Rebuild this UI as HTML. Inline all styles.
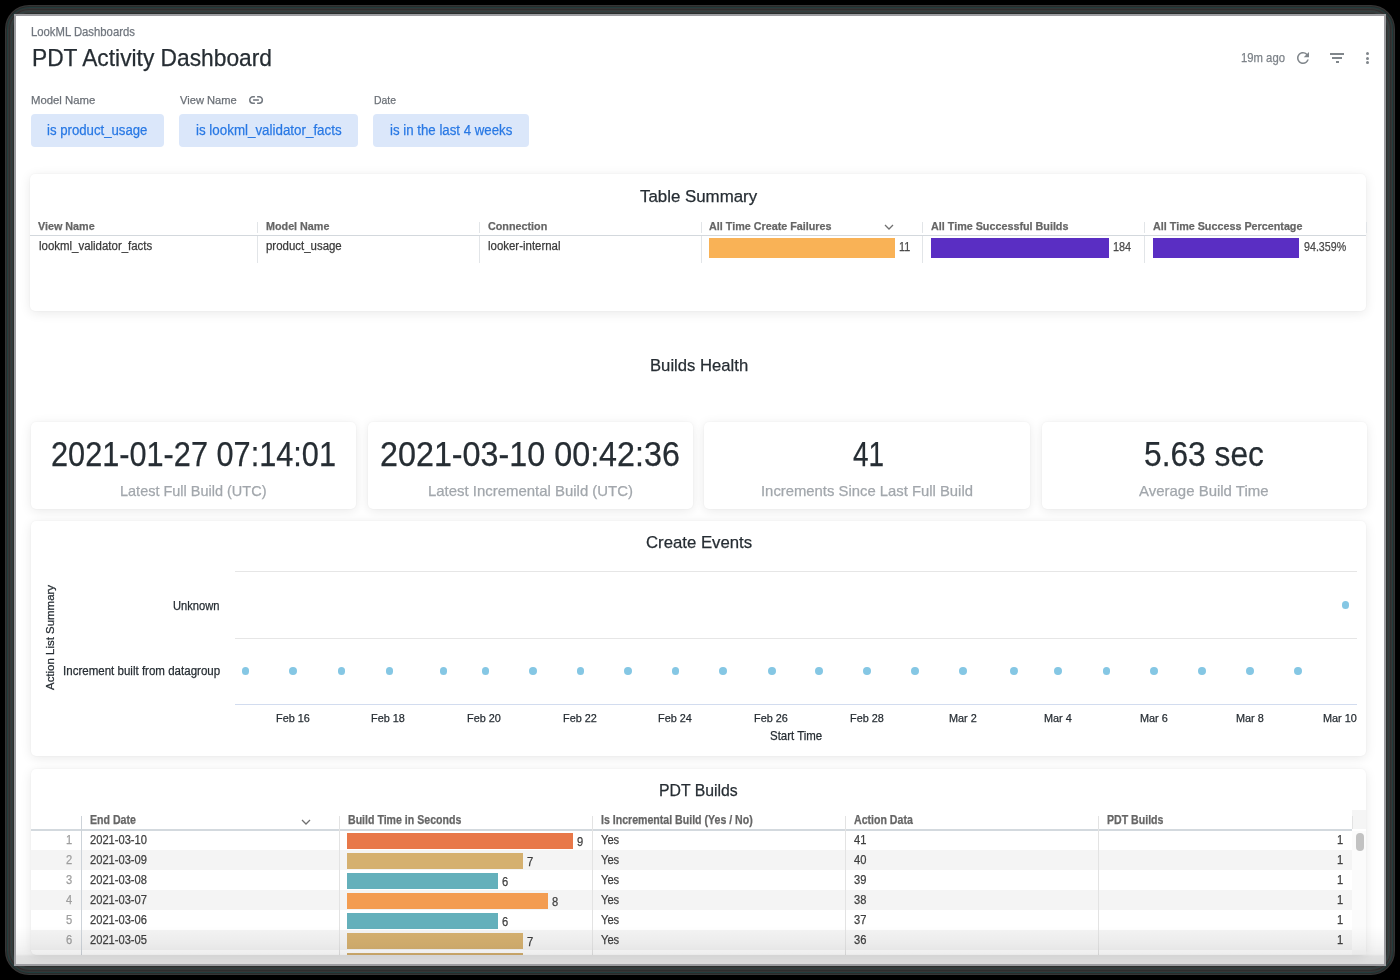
<!DOCTYPE html>
<html><head><meta charset="utf-8">
<style>
*{box-sizing:border-box;margin:0;padding:0}
html,body{width:1400px;height:980px;overflow:hidden;background:#000;font-family:"Liberation Sans",sans-serif}
.abs{position:absolute}
.fr{position:absolute}
#win{position:absolute;left:14px;top:14px;width:1372px;height:952px;border:2px solid #9d9da1;background:#fff;overflow:hidden}
#c{position:absolute;left:-16px;top:-16px;width:1400px;height:980px;will-change:transform}
.t{position:absolute;white-space:nowrap;line-height:1;transform-origin:0 0;-webkit-text-stroke:0.25px currentColor}
.card{position:absolute;background:#fff;border-radius:5px;box-shadow:0 0 2px rgba(0,0,0,.07),0 2px 12px rgba(0,0,0,.09)}
</style></head>
<body>
<div class="fr" style="left:5px;top:5px;width:1390px;height:970px;border-radius:24px;background:#363636"></div><div class="fr" style="left:6px;top:6px;width:1388px;height:968px;border-radius:23px;background:#2a2a2a"></div><div class="fr" style="left:7px;top:7px;width:1386px;height:966px;border-radius:22px;background:#213d3d"></div><div class="fr" style="left:8px;top:8px;width:1384px;height:964px;border-radius:21px;background:#373535"></div><div class="fr" style="left:9px;top:9px;width:1382px;height:962px;border-radius:20px;background:#2e2e2e"></div><div class="fr" style="left:10px;top:10px;width:1380px;height:960px;border-radius:19px;background:#3a3a3a"></div><div class="fr" style="left:11px;top:11px;width:1378px;height:958px;border-radius:18px;background:#304040"></div><div class="fr" style="left:12px;top:12px;width:1376px;height:956px;border-radius:17px;background:#383838"></div><div class="fr" style="left:13px;top:13px;width:1374px;height:954px;border-radius:16px;background:#2a302e"></div>
<div id="win"><div id="c">
<div class="t" style="left:31.00px;top:26px;font-size:12.06px;color:#70767e;transform:scaleX(0.9381);">LookML Dashboards</div>
<div class="t" style="left:32.00px;top:47px;font-size:23.26px;color:#262d33;transform:scaleX(0.9791);">PDT Activity Dashboard</div>
<div class="t" style="left:1241.40px;top:52px;font-size:12.06px;color:#7d8389;transform:scaleX(0.9376);">19m ago</div>
<svg class="abs" style="left:1293.7px;top:49px" width="18" height="18" viewBox="0 0 24 24"><path fill="#80868b" d="M17.65 6.35A7.958 7.958 0 0 0 12 4c-4.42 0-7.99 3.58-7.99 8s3.57 8 7.99 8c3.73 0 6.84-2.55 7.73-6h-2.08A5.990 5.990 0 0 1 12 18c-3.310 0-6-2.69-6-6s2.690-6 6-6c1.66 0 3.140.69 4.220 1.780L13 11h7V4l-2.35 2.35z"/></svg>
<div class="abs" style="left:1330px;top:53.2px;width:14px;height:1.7px;background:#80868b"></div>
<div class="abs" style="left:1332.3px;top:57.2px;width:9.4px;height:1.7px;background:#80868b"></div>
<div class="abs" style="left:1335.5px;top:61.2px;width:3px;height:1.7px;background:#80868b"></div>
<div class="abs" style="left:1366.1px;top:51.9px;width:3.2px;height:3.2px;border-radius:50%;background:#80868b"></div>
<div class="abs" style="left:1366.1px;top:56.6px;width:3.2px;height:3.2px;border-radius:50%;background:#80868b"></div>
<div class="abs" style="left:1366.1px;top:61.3px;width:3.2px;height:3.2px;border-radius:50%;background:#80868b"></div>
<div class="t" style="left:30.70px;top:94px;font-size:11.63px;color:#6b7077;transform:scaleX(0.9753);">Model Name</div>
<div class="t" style="left:179.70px;top:94px;font-size:11.63px;color:#6b7077;transform:scaleX(0.9571);">View Name</div>
<div class="t" style="left:374.00px;top:94px;font-size:11.63px;color:#6b7077;transform:scaleX(0.8967);">Date</div>
<svg class="abs" style="left:240px;top:90px" width="30" height="22" viewBox="240 90 30 22"><g fill="none" stroke="#737980" stroke-width="1.5"><path d="M254.9 96.85H252.9A3.15 3.15 0 0 0 252.9 103.15H254.9"/><path d="M257.1 96.85H259.2A3.15 3.15 0 0 1 259.2 103.15H257.1"/><path d="M253.1 100H258.9" stroke-width="1.6"/></g></svg>
<div class="abs" style="left:31px;top:113.6px;width:133.0px;height:33.8px;background:#dbe7fa;border-radius:4px"></div>
<div class="t" style="left:47.00px;top:123px;font-size:14.68px;color:#2878e4;transform:scaleX(0.8990);">is product_usage</div>
<div class="abs" style="left:179.3px;top:113.6px;width:178.3px;height:33.8px;background:#dbe7fa;border-radius:4px"></div>
<div class="t" style="left:195.70px;top:123px;font-size:14.68px;color:#2878e4;transform:scaleX(0.9110);">is lookml_validator_facts</div>
<div class="abs" style="left:373.3px;top:113.6px;width:155.5px;height:33.8px;background:#dbe7fa;border-radius:4px"></div>
<div class="t" style="left:389.60px;top:123px;font-size:14.68px;color:#2878e4;transform:scaleX(0.9038);">is in the last 4 weeks</div>
<div class="card" style="left:30px;top:174px;width:1336px;height:137px"></div>
<div class="t" style="left:640.00px;top:189px;font-size:16.86px;color:#262d33;">Table Summary</div>
<div class="abs" style="left:30px;top:234.9px;width:1336px;height:1.4px;background:#d3d8dd"></div>
<div class="abs" style="left:257.0px;top:222px;width:1px;height:11px;background:#e2e5e8"></div>
<div class="abs" style="left:257.0px;top:236.3px;width:1px;height:26.5px;background:#e2e5e8"></div>
<div class="abs" style="left:478.5px;top:222px;width:1px;height:11px;background:#e2e5e8"></div>
<div class="abs" style="left:478.5px;top:236.3px;width:1px;height:26.5px;background:#e2e5e8"></div>
<div class="abs" style="left:700.5px;top:222px;width:1px;height:11px;background:#e2e5e8"></div>
<div class="abs" style="left:700.5px;top:236.3px;width:1px;height:26.5px;background:#e2e5e8"></div>
<div class="abs" style="left:922.0px;top:222px;width:1px;height:11px;background:#e2e5e8"></div>
<div class="abs" style="left:922.0px;top:236.3px;width:1px;height:26.5px;background:#e2e5e8"></div>
<div class="abs" style="left:1144.0px;top:222px;width:1px;height:11px;background:#e2e5e8"></div>
<div class="abs" style="left:1144.0px;top:236.3px;width:1px;height:26.5px;background:#e2e5e8"></div>
<div class="abs" style="left:1365.5px;top:222px;width:1px;height:11px;background:#e2e5e8"></div>
<div class="t" style="left:38.40px;top:220px;font-size:11.63px;color:#666666;font-weight:700;transform:scaleX(0.9263);">View Name</div>
<div class="t" style="left:265.50px;top:220px;font-size:11.63px;color:#666666;font-weight:700;transform:scaleX(0.9263);">Model Name</div>
<div class="t" style="left:487.50px;top:220px;font-size:11.63px;color:#666666;font-weight:700;transform:scaleX(0.9263);">Connection</div>
<div class="t" style="left:709.00px;top:220px;font-size:11.63px;color:#666666;font-weight:700;transform:scaleX(0.9263);">All Time Create Failures</div>
<div class="t" style="left:930.75px;top:220px;font-size:11.63px;color:#666666;font-weight:700;transform:scaleX(0.9263);">All Time Successful Builds</div>
<div class="t" style="left:1152.50px;top:220px;font-size:11.63px;color:#666666;font-weight:700;transform:scaleX(0.9263);">All Time Success Percentage</div>
<div class="t" style="left:38.75px;top:240px;font-size:12.50px;color:#3a3a3a;transform:scaleX(0.9156);">lookml_validator_facts</div>
<div class="t" style="left:265.50px;top:240px;font-size:12.50px;color:#3a3a3a;transform:scaleX(0.9156);">product_usage</div>
<div class="t" style="left:487.50px;top:240px;font-size:12.50px;color:#3a3a3a;transform:scaleX(0.9156);">looker-internal</div>
<div class="abs" style="left:709px;top:238px;width:185.5px;height:20px;background:#f9b256"></div>
<div class="abs" style="left:930.75px;top:238px;width:178px;height:20px;background:#5a2ec3"></div>
<div class="abs" style="left:1152.5px;top:238px;width:146.25px;height:20px;background:#5a2ec3"></div>
<div class="t" style="left:898.75px;top:241px;font-size:12.06px;color:#4a4a4a;transform:scaleX(0.8967);">11</div>
<div class="t" style="left:1113.10px;top:241px;font-size:12.06px;color:#4a4a4a;transform:scaleX(0.9034);">184</div>
<div class="t" style="left:1303.75px;top:241px;font-size:12.06px;color:#4a4a4a;transform:scaleX(0.8866);">94.359%</div>
<svg class="abs" style="left:884px;top:223px" width="10" height="8" viewBox="0 0 10 8"><path d="M1 2 L5 6 L9 2" fill="none" stroke="#707070" stroke-width="1.3"/></svg>
<div class="t" style="left:649.60px;top:357px;font-size:17.15px;color:#262d33;transform:scaleX(0.9721);">Builds Health</div>
<div class="card" style="left:31px;top:421.5px;width:325px;height:87.5px"></div>
<div class="t" style="left:51.00px;top:437px;font-size:34.88px;color:#262d33;transform:scaleX(0.8799);">2021-01-27 07:14:01</div>
<div class="t" style="left:120.00px;top:484px;font-size:14.97px;color:#a2a7ac;transform:scaleX(0.9674);">Latest Full Build (UTC)</div>
<div class="card" style="left:367.5px;top:421.5px;width:325.0px;height:87.5px"></div>
<div class="t" style="left:380.00px;top:437px;font-size:34.88px;color:#262d33;transform:scaleX(0.9262);">2021-03-10 00:42:36</div>
<div class="t" style="left:427.50px;top:484px;font-size:14.97px;color:#a2a7ac;transform:scaleX(0.9977);">Latest Incremental Build (UTC)</div>
<div class="card" style="left:704px;top:421.5px;width:326px;height:87.5px"></div>
<div class="t" style="left:852.50px;top:437px;font-size:34.88px;color:#262d33;transform:scaleX(0.8006);">41</div>
<div class="t" style="left:761.00px;top:484px;font-size:14.97px;color:#a2a7ac;transform:scaleX(0.9913);">Increments Since Last Full Build</div>
<div class="card" style="left:1041.5px;top:421.5px;width:325.0px;height:87.5px"></div>
<div class="t" style="left:1144.00px;top:437px;font-size:34.88px;color:#262d33;transform:scaleX(0.9101);">5.63 sec</div>
<div class="t" style="left:1139.00px;top:484px;font-size:14.97px;color:#a2a7ac;">Average Build Time</div>
<div class="card" style="left:30.8px;top:521px;width:1335.2px;height:235px"></div>
<div class="t" style="left:645.60px;top:534px;font-size:17.15px;color:#262d33;transform:scaleX(0.9774);">Create Events</div>
<div class="abs" style="left:235px;top:571.2px;width:1122px;height:1px;background:#e6e6e6"></div>
<div class="abs" style="left:235px;top:637.8px;width:1122px;height:1px;background:#e6e6e6"></div>
<div class="abs" style="left:235px;top:703.8px;width:1122px;height:1.2px;background:#d2dcef"></div>
<div class="t" style="left:173.30px;top:600px;font-size:12.50px;color:#262d33;transform:scaleX(0.8921);">Unknown</div>
<div class="t" style="left:63.20px;top:665px;font-size:12.50px;color:#262d33;transform:scaleX(0.9233);">Increment built from datagroup</div>
<div class="abs" style="left:49.5px;top:637.15px;width:0;height:0;transform:rotate(-90deg)"><div class="t" style="left:-52.55px;top:-6.40px;font-size:11.63px;color:#262d33;transform:scaleX(0.9857)">Action List Summary</div></div>
<div class="abs" style="left:241.6px;top:667.1px;width:7.8px;height:7.8px;border-radius:50%;background:#85c7e4"></div>
<div class="abs" style="left:289.1px;top:667.1px;width:7.8px;height:7.8px;border-radius:50%;background:#85c7e4"></div>
<div class="abs" style="left:337.6px;top:667.1px;width:7.8px;height:7.8px;border-radius:50%;background:#85c7e4"></div>
<div class="abs" style="left:385.6px;top:667.1px;width:7.8px;height:7.8px;border-radius:50%;background:#85c7e4"></div>
<div class="abs" style="left:439.6px;top:667.1px;width:7.8px;height:7.8px;border-radius:50%;background:#85c7e4"></div>
<div class="abs" style="left:481.6px;top:667.1px;width:7.8px;height:7.8px;border-radius:50%;background:#85c7e4"></div>
<div class="abs" style="left:529.1px;top:667.1px;width:7.8px;height:7.8px;border-radius:50%;background:#85c7e4"></div>
<div class="abs" style="left:576.6px;top:667.1px;width:7.8px;height:7.8px;border-radius:50%;background:#85c7e4"></div>
<div class="abs" style="left:624.1px;top:667.1px;width:7.8px;height:7.8px;border-radius:50%;background:#85c7e4"></div>
<div class="abs" style="left:671.6px;top:667.1px;width:7.8px;height:7.8px;border-radius:50%;background:#85c7e4"></div>
<div class="abs" style="left:719.1px;top:667.1px;width:7.8px;height:7.8px;border-radius:50%;background:#85c7e4"></div>
<div class="abs" style="left:768.1px;top:667.1px;width:7.8px;height:7.8px;border-radius:50%;background:#85c7e4"></div>
<div class="abs" style="left:815.1px;top:667.1px;width:7.8px;height:7.8px;border-radius:50%;background:#85c7e4"></div>
<div class="abs" style="left:863.1px;top:667.1px;width:7.8px;height:7.8px;border-radius:50%;background:#85c7e4"></div>
<div class="abs" style="left:911.1px;top:667.1px;width:7.8px;height:7.8px;border-radius:50%;background:#85c7e4"></div>
<div class="abs" style="left:959.1px;top:667.1px;width:7.8px;height:7.8px;border-radius:50%;background:#85c7e4"></div>
<div class="abs" style="left:1010.1px;top:667.1px;width:7.8px;height:7.8px;border-radius:50%;background:#85c7e4"></div>
<div class="abs" style="left:1054.1px;top:667.1px;width:7.8px;height:7.8px;border-radius:50%;background:#85c7e4"></div>
<div class="abs" style="left:1102.6px;top:667.1px;width:7.8px;height:7.8px;border-radius:50%;background:#85c7e4"></div>
<div class="abs" style="left:1150.1px;top:667.1px;width:7.8px;height:7.8px;border-radius:50%;background:#85c7e4"></div>
<div class="abs" style="left:1198.1px;top:667.1px;width:7.8px;height:7.8px;border-radius:50%;background:#85c7e4"></div>
<div class="abs" style="left:1246.1px;top:667.1px;width:7.8px;height:7.8px;border-radius:50%;background:#85c7e4"></div>
<div class="abs" style="left:1294.1px;top:667.1px;width:7.8px;height:7.8px;border-radius:50%;background:#85c7e4"></div>
<div class="abs" style="left:1341.6px;top:601.1px;width:7.8px;height:7.8px;border-radius:50%;background:#85c7e4"></div>
<div class="t" style="left:275.65px;top:712px;font-size:11.63px;color:#262d33;transform:scaleX(0.9359);">Feb 16</div>
<div class="t" style="left:371.35px;top:712px;font-size:11.63px;color:#262d33;transform:scaleX(0.9359);">Feb 18</div>
<div class="t" style="left:467.05px;top:712px;font-size:11.63px;color:#262d33;transform:scaleX(0.9359);">Feb 20</div>
<div class="t" style="left:562.75px;top:712px;font-size:11.63px;color:#262d33;transform:scaleX(0.9359);">Feb 22</div>
<div class="t" style="left:658.45px;top:712px;font-size:11.63px;color:#262d33;transform:scaleX(0.9359);">Feb 24</div>
<div class="t" style="left:754.15px;top:712px;font-size:11.63px;color:#262d33;transform:scaleX(0.9359);">Feb 26</div>
<div class="t" style="left:849.85px;top:712px;font-size:11.63px;color:#262d33;transform:scaleX(0.9359);">Feb 28</div>
<div class="t" style="left:948.60px;top:712px;font-size:11.63px;color:#262d33;transform:scaleX(0.9359);">Mar 2</div>
<div class="t" style="left:1044.30px;top:712px;font-size:11.63px;color:#262d33;transform:scaleX(0.9359);">Mar 4</div>
<div class="t" style="left:1140.00px;top:712px;font-size:11.63px;color:#262d33;transform:scaleX(0.9359);">Mar 6</div>
<div class="t" style="left:1235.70px;top:712px;font-size:11.63px;color:#262d33;transform:scaleX(0.9359);">Mar 8</div>
<div class="t" style="left:1322.65px;top:712px;font-size:11.63px;color:#262d33;transform:scaleX(0.9359);">Mar 10</div>
<div class="t" style="left:769.80px;top:730px;font-size:12.06px;color:#262d33;transform:scaleX(0.9499);">Start Time</div>
<div class="card" style="left:30.7px;top:768.7px;width:1335.3px;height:186.3px"></div>
<div class="t" style="left:659.40px;top:783px;font-size:16.86px;color:#262d33;transform:scaleX(0.9375);">PDT Builds</div>
<div class="abs" style="left:30.7px;top:850.4px;width:1321.3px;height:20px;background:#f4f4f4"></div>
<div class="abs" style="left:30.7px;top:890.4px;width:1321.3px;height:20px;background:#f4f4f4"></div>
<div class="abs" style="left:30.7px;top:930.4px;width:1321.3px;height:20px;background:#f4f4f4"></div>
<div class="abs" style="left:30.7px;top:829px;width:1321.3px;height:1.7px;background:#d3d9de"></div>
<div class="abs" style="left:1352px;top:810px;width:14px;height:19px;background:#f5f5f5"></div>
<div class="abs" style="left:1352px;top:830.7px;width:14px;height:124.3px;background:#fbfbfb"></div>
<div class="abs" style="left:1356.4px;top:833px;width:7.6px;height:17.5px;border-radius:4px;background:#c2c2c2"></div>
<div class="abs" style="left:81px;top:816px;width:1px;height:139px;background:#cdd3d9"></div>
<div class="abs" style="left:339.0px;top:816px;width:1px;height:139px;background:#e3e3e3"></div>
<div class="abs" style="left:592.1px;top:816px;width:1px;height:139px;background:#e3e3e3"></div>
<div class="abs" style="left:845.2px;top:816px;width:1px;height:139px;background:#e3e3e3"></div>
<div class="abs" style="left:1098.2px;top:816px;width:1px;height:139px;background:#e3e3e3"></div>
<div class="abs" style="left:1351.5px;top:816px;width:1px;height:13px;background:#e3e3e3"></div>
<div class="t" style="left:90.00px;top:815px;font-size:11.92px;color:#666666;font-weight:700;transform:scaleX(0.8888);">End Date</div>
<div class="t" style="left:348.00px;top:815px;font-size:11.92px;color:#666666;font-weight:700;transform:scaleX(0.8888);">Build Time in Seconds</div>
<div class="t" style="left:601.00px;top:815px;font-size:11.92px;color:#666666;font-weight:700;transform:scaleX(0.8888);">Is Incremental Build (Yes / No)</div>
<div class="t" style="left:854.00px;top:815px;font-size:11.92px;color:#666666;font-weight:700;transform:scaleX(0.8888);">Action Data</div>
<div class="t" style="left:1107.30px;top:815px;font-size:11.92px;color:#666666;font-weight:700;transform:scaleX(0.8888);">PDT Builds</div>
<svg class="abs" style="left:300.5px;top:818px" width="10" height="8" viewBox="0 0 10 8"><path d="M1 2 L5 6 L9 2" fill="none" stroke="#707070" stroke-width="1.3"/></svg>
<div class="abs" style="left:347.4px;top:832.8px;width:225.6px;height:16.0px;background:#e87849"></div>
<div class="t" style="left:65.72px;top:834px;font-size:12.21px;color:#9e9e9e;transform:scaleX(0.9127);">1</div>
<div class="t" style="left:89.80px;top:834px;font-size:12.21px;color:#3f3f3f;transform:scaleX(0.9127);">2021-03-10</div>
<div class="t" style="left:577.03px;top:836px;font-size:12.21px;color:#3f3f3f;transform:scaleX(0.9127);">9</div>
<div class="t" style="left:601.00px;top:834px;font-size:12.21px;color:#3f3f3f;transform:scaleX(0.9127);">Yes</div>
<div class="t" style="left:853.80px;top:834px;font-size:12.21px;color:#3f3f3f;transform:scaleX(0.9127);">41</div>
<div class="t" style="left:1337.32px;top:834px;font-size:12.21px;color:#3f3f3f;transform:scaleX(0.9127);">1</div>
<div class="abs" style="left:347.4px;top:852.8px;width:175.5px;height:16.0px;background:#d5b06f"></div>
<div class="t" style="left:65.72px;top:854px;font-size:12.21px;color:#9e9e9e;transform:scaleX(0.9127);">2</div>
<div class="t" style="left:89.80px;top:854px;font-size:12.21px;color:#3f3f3f;transform:scaleX(0.9127);">2021-03-09</div>
<div class="t" style="left:526.89px;top:856px;font-size:12.21px;color:#3f3f3f;transform:scaleX(0.9127);">7</div>
<div class="t" style="left:601.00px;top:854px;font-size:12.21px;color:#3f3f3f;transform:scaleX(0.9127);">Yes</div>
<div class="t" style="left:853.80px;top:854px;font-size:12.21px;color:#3f3f3f;transform:scaleX(0.9127);">40</div>
<div class="t" style="left:1337.32px;top:854px;font-size:12.21px;color:#3f3f3f;transform:scaleX(0.9127);">1</div>
<div class="abs" style="left:347.4px;top:872.8px;width:150.4px;height:16.0px;background:#64b0bb"></div>
<div class="t" style="left:65.72px;top:874px;font-size:12.21px;color:#9e9e9e;transform:scaleX(0.9127);">3</div>
<div class="t" style="left:89.80px;top:874px;font-size:12.21px;color:#3f3f3f;transform:scaleX(0.9127);">2021-03-08</div>
<div class="t" style="left:501.82px;top:876px;font-size:12.21px;color:#3f3f3f;transform:scaleX(0.9127);">6</div>
<div class="t" style="left:601.00px;top:874px;font-size:12.21px;color:#3f3f3f;transform:scaleX(0.9127);">Yes</div>
<div class="t" style="left:853.80px;top:874px;font-size:12.21px;color:#3f3f3f;transform:scaleX(0.9127);">39</div>
<div class="t" style="left:1337.32px;top:874px;font-size:12.21px;color:#3f3f3f;transform:scaleX(0.9127);">1</div>
<div class="abs" style="left:347.4px;top:892.8px;width:200.6px;height:16.0px;background:#f39c51"></div>
<div class="t" style="left:65.72px;top:894px;font-size:12.21px;color:#9e9e9e;transform:scaleX(0.9127);">4</div>
<div class="t" style="left:89.80px;top:894px;font-size:12.21px;color:#3f3f3f;transform:scaleX(0.9127);">2021-03-07</div>
<div class="t" style="left:551.96px;top:896px;font-size:12.21px;color:#3f3f3f;transform:scaleX(0.9127);">8</div>
<div class="t" style="left:601.00px;top:894px;font-size:12.21px;color:#3f3f3f;transform:scaleX(0.9127);">Yes</div>
<div class="t" style="left:853.80px;top:894px;font-size:12.21px;color:#3f3f3f;transform:scaleX(0.9127);">38</div>
<div class="t" style="left:1337.32px;top:894px;font-size:12.21px;color:#3f3f3f;transform:scaleX(0.9127);">1</div>
<div class="abs" style="left:347.4px;top:912.8px;width:150.4px;height:16.0px;background:#64b0bb"></div>
<div class="t" style="left:65.72px;top:914px;font-size:12.21px;color:#9e9e9e;transform:scaleX(0.9127);">5</div>
<div class="t" style="left:89.80px;top:914px;font-size:12.21px;color:#3f3f3f;transform:scaleX(0.9127);">2021-03-06</div>
<div class="t" style="left:501.82px;top:916px;font-size:12.21px;color:#3f3f3f;transform:scaleX(0.9127);">6</div>
<div class="t" style="left:601.00px;top:914px;font-size:12.21px;color:#3f3f3f;transform:scaleX(0.9127);">Yes</div>
<div class="t" style="left:853.80px;top:914px;font-size:12.21px;color:#3f3f3f;transform:scaleX(0.9127);">37</div>
<div class="t" style="left:1337.32px;top:914px;font-size:12.21px;color:#3f3f3f;transform:scaleX(0.9127);">1</div>
<div class="abs" style="left:347.4px;top:932.8px;width:175.5px;height:16.0px;background:#d5b06f"></div>
<div class="t" style="left:65.72px;top:934px;font-size:12.21px;color:#9e9e9e;transform:scaleX(0.9127);">6</div>
<div class="t" style="left:89.80px;top:934px;font-size:12.21px;color:#3f3f3f;transform:scaleX(0.9127);">2021-03-05</div>
<div class="t" style="left:526.89px;top:936px;font-size:12.21px;color:#3f3f3f;transform:scaleX(0.9127);">7</div>
<div class="t" style="left:601.00px;top:934px;font-size:12.21px;color:#3f3f3f;transform:scaleX(0.9127);">Yes</div>
<div class="t" style="left:853.80px;top:934px;font-size:12.21px;color:#3f3f3f;transform:scaleX(0.9127);">36</div>
<div class="t" style="left:1337.32px;top:934px;font-size:12.21px;color:#3f3f3f;transform:scaleX(0.9127);">1</div>
<div class="abs" style="left:347.4px;top:952.8px;width:175.5px;height:2.2px;background:#d5b06f"></div>
<div class="abs" style="left:16px;top:926px;width:1368px;height:38px;background:linear-gradient(rgba(0,0,0,0) 0px,rgba(0,0,0,.035) 18px,rgba(0,0,0,.065) 28px,rgba(0,0,0,.12) 30px,rgba(0,0,0,.13) 38px)"></div>
</div></div>
</body></html>
